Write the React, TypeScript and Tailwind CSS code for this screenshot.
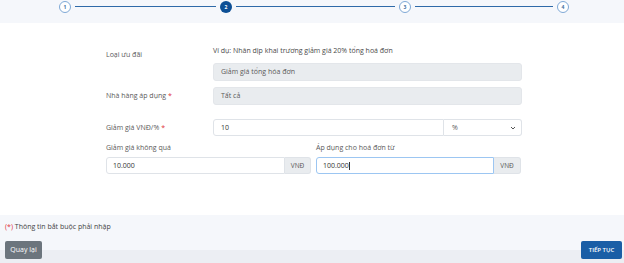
import React from 'react';

const font = { fontFamily: '"Open Sans", "Noto Sans", sans-serif' };

function Step({ n, active }: { n: number; active?: boolean }) {
  return (
    <div
      className={
        active
          ? 'flex h-[12px] w-[12px] shrink-0 items-center justify-center rounded-full bg-[#0d4f95] text-[5px] font-bold text-white'
          : 'flex h-[12px] w-[12px] shrink-0 items-center justify-center rounded-full border border-[#7fa9d6] bg-white text-[5px] font-bold text-[#3f6f9f]'
      }
    >
      {n}
    </div>
  );
}

function Line({ w }: { w: string }) {
  return <div className={`mx-[4px] h-[1.5px] bg-[#2f6aa8] ${w}`} />;
}

export default function App() {
  return (
    <div style={font} className="flex h-[263px] w-[624px] flex-col bg-[#f5f7fb] text-[7px] leading-[10px] text-[#5a5a5a]">
      {/* stepper */}
      <div className="h-[23px] pl-[59px] pt-[0.5px]">
        <div className="flex h-[12px] items-center">
          <Step n={1} />
          <Line w="w-[141px]" />
          <Step n={2} active />
          <Line w="w-[159px]" />
          <Step n={3} />
          <Line w="w-[138px]" />
          <Step n={4} />
        </div>
      </div>

      {/* form panel */}
      <div className="h-[192px] bg-white pl-[106px] pt-[23px]">
        <div className="grid grid-cols-[107px_309px]">
          <div className="mt-[4px]">Loại ưu đãi</div>
          <div className="flex flex-col">
            <div className="text-[#4a4a4a]">Ví dụ: Nhân dịp khai trương giảm giá 20% tổng hoá đơn</div>
            <div className="mt-[7px] flex h-[18px] items-center rounded-[3px] border border-[#e3e6ea] bg-[#e9ecef] pl-[7px]">
              Giảm giá tổng hóa đơn
            </div>
          </div>

          <div className="mt-[6px] flex h-[18px] items-center">
            Nhà hàng áp dụng <span className="ml-[2px] text-[#e0333a]">*</span>
          </div>
          <div className="mt-[6px] flex h-[18px] items-center rounded-[3px] border border-[#e3e6ea] bg-[#e9ecef] pl-[7px]">
            Tất cả
          </div>

          <div className="mt-[14px] flex h-[17px] items-center">
            Giảm giá VNĐ/% <span className="ml-[2px] text-[#e0333a]">*</span>
          </div>
          <div className="mt-[14px] flex h-[17px]">
            <div className="flex flex-1 items-center rounded-l-[3px] border border-[#dfe3e8] bg-white pl-[7px] text-[#333]">10</div>
            <div className="flex w-[78px] items-center justify-between rounded-r-[3px] border border-l-0 border-[#dfe3e8] bg-white pl-[8px] pr-[5px]">
              <span>%</span>
              <svg width="6" height="4" viewBox="0 0 6 4" fill="none" stroke="#555" strokeWidth="1">
                <path d="M1 1l2 2 2-2" />
              </svg>
            </div>
          </div>
        </div>

        <div className="mt-[7px] flex gap-[5px]">
          <div className="w-[205px]">
            <div>Giảm giá không quá</div>
            <div className="mt-[4px] flex h-[17px]">
              <div className="flex flex-1 items-center rounded-l-[3px] border border-[#dfe3e8] bg-white pl-[6px] text-[#333]">10.000</div>
              <div className="flex w-[26px] items-center justify-center rounded-r-[3px] border border-l-0 border-[#dfe3e8] bg-[#e9ecef] text-[6.5px]">VNĐ</div>
            </div>
          </div>
          <div className="w-[205px]">
            <div>Áp dụng cho hoá đơn từ</div>
            <div className="mt-[4px] flex h-[17px]">
              <div className="flex flex-1 items-center rounded-l-[3px] border border-[#9cc6f2] bg-white pl-[6px] text-[#333]">
                100.000<span className="ml-[0.5px] inline-block h-[8px] w-[0.5px] bg-[#333]" />
              </div>
              <div className="flex w-[27px] items-center justify-center rounded-r-[3px] border border-l-0 border-[#dfe3e8] bg-[#e9ecef] text-[6.5px]">VNĐ</div>
            </div>
          </div>
        </div>
      </div>

      {/* footer */}
      <div className="pl-[5px] pt-[7px] text-[#444]">
        <span className="text-[#e0333a]">(*)</span> Thông tin bắt buộc phải nhập
      </div>
      <div className="mt-[9px] flex flex-1 items-start justify-between bg-[linear-gradient(to_bottom,#f5f7fb_9px,#eceef3_9px)] pl-[5px] pr-[2px]">
        <button className="flex h-[18px] w-[37px] items-center justify-center rounded-[2px] bg-[#6c757d] text-[7px] text-white">
          Quay lại
        </button>
        <button className="flex h-[18px] w-[41px] items-center justify-center rounded-[2px] bg-[#1a5ea6] text-[6px] font-semibold text-white">
          TIẾP TỤC
        </button>
      </div>
    </div>
  );
}
